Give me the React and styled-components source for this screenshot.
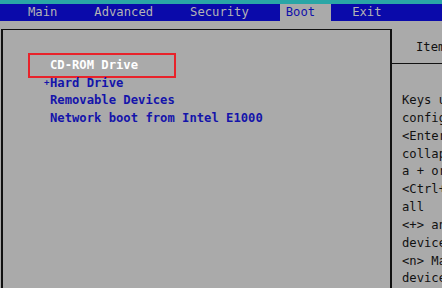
import styled, { createGlobalStyle } from 'styled-components';

const GlobalStyle = createGlobalStyle`
  html, body {
    margin: 0;
    padding: 0;
    background: #aaaaaa;
    overflow: hidden;
  }
`;

const Screen = styled.div`
  width: 600px;
  height: 288px;
  display: flex;
  flex-direction: column;
  background: #aaaaaa;
  font-family: 'DejaVu Sans Mono', 'Liberation Mono', monospace;
  font-size: 12.2px;
  font-weight: bold;
  overflow: hidden;
`;

const TitleStrip = styled.div`
  height: 4px;
  background: #2aa6a6;
  flex: 0 0 auto;
`;

const MenuBar = styled.nav`
  height: 17px;
  background: #0a0aaa;
  display: flex;
  align-items: stretch;
  gap: 15px;
  padding-left: 22px;
  flex: 0 0 auto;
`;

const MenuItem = styled.div`
  display: flex;
  align-items: center;
  padding: 0 16px 0 6px;
  color: ${(p) => (p.$active ? '#1010aa' : '#b4b4b4')};
  background: ${(p) => (p.$active ? '#aaaaaa' : 'transparent')};
  font-weight: normal;
  line-height: 17px;
`;

const Body = styled.div`
  flex: 1;
  display: flex;
  padding-top: 8px;
  padding-left: 1px;
`;

const MainPanel = styled.section`
  width: 387px;
  border-top: 1px solid #111;
  border-left: 2px solid #111;
  border-right: 2px solid #111;
  padding-top: 27px;
`;

const BootList = styled.ul`
  list-style: none;
  margin: 0;
  padding: 0 0 0 47px;
  line-height: 17.7px;
`;

const BootItem = styled.li`
  position: relative;
  color: ${(p) => (p.$selected ? '#ffffff' : '#1414aa')};
  white-space: pre;
  &::before {
    content: '${(p) => (p.$expand ? '+' : '')}';
    position: absolute;
    left: -6px;
    top: -1px;
    font-size: 9px;
  }
`;

const Highlight = styled.span`
  position: absolute;
  left: -22px;
  top: -4px;
  width: 144px;
  height: 21px;
  border: 2px solid #e8222a;
  pointer-events: none;
`;

const HelpPanel = styled.aside`
  width: 180px;
  display: flex;
  flex-direction: column;
  border-top: 1px solid #aaaaaa;
`;

const HelpHeader = styled.div`
  height: 33px;
  border-bottom: 1px solid #111;
  display: flex;
  align-items: center;
  justify-content: center;
  color: #111;
  font-weight: normal;
`;

const HelpText = styled.div`
  padding: 28px 0 0 10px;
  line-height: 17.85px;
  color: #111;
  font-weight: normal;
  white-space: pre;
`;

const menu = ['Main', 'Advanced', 'Security', 'Boot', 'Exit'];

const helpLines = [
  'Keys used to view or',
  'configure devices:',
  '<Enter> expands or',
  'collapses devices with',
  'a + or -',
  '<Ctrl+Enter> expands',
  'all',
  '<+> and <-> moves the',
  'device up or down.',
  '<n> May move removable',
  'device between Hard',
  'Disk or Removable',
];

export default function App() {
  return (
    <Screen>
      <GlobalStyle />
      <TitleStrip />
      <MenuBar>
        {menu.map((m) => (
          <MenuItem key={m} $active={m === 'Boot'}>
            {m}
          </MenuItem>
        ))}
      </MenuBar>
      <Body>
        <MainPanel>
          <BootList>
            <BootItem $selected>
              <Highlight />
              {'CD-ROM Drive'}
            </BootItem>
            <BootItem $expand>Hard Drive</BootItem>
            <BootItem>Removable Devices</BootItem>
            <BootItem>Network boot from Intel E1000</BootItem>
          </BootList>
        </MainPanel>
        <HelpPanel>
          <HelpHeader>Item Specific Help</HelpHeader>
          <HelpText>{helpLines.join('\n')}</HelpText>
        </HelpPanel>
      </Body>
    </Screen>
  );
}
